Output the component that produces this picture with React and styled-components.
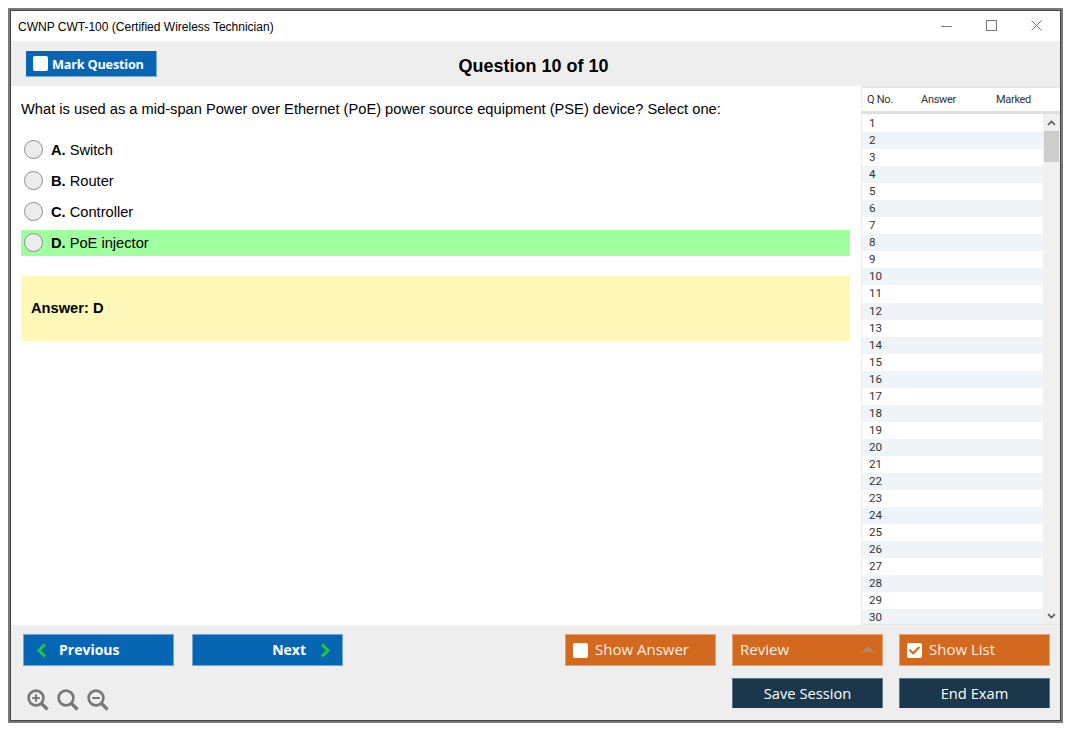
import React from 'react';
import styled, { createGlobalStyle } from 'styled-components';
import { FaCheck } from 'react-icons/fa';

const GlobalStyle = createGlobalStyle`
  html, body { margin: 0; padding: 0; background: #fff; }
  * { box-sizing: border-box; }
`;

const Window = styled.div`
  margin: 8px;
  width: 1055px;
  height: 715px;
  border: 2px solid #7a7a7a;
  display: flex;
  flex-direction: column;
  font-family: "Liberation Sans", Arial, sans-serif;
  color: #000;
  background: #fff;
  outline: 1px solid #444;
  outline-offset: -3px;
  padding: 1px;
`;

const TitleBar = styled.div`
  height: 30px;
  flex: none;
  display: flex;
  align-items: center;
  justify-content: space-between;
  padding-left: 7px;
  font-size: 12px;
  span { padding-top: 2px; }
`;

const WindowControls = styled.div`
  display: flex;
  align-items: center;
  gap: 34px;
  padding: 0 18px 2px 0;
  svg { display: block; }
`;

const Toolbar = styled.div`
  height: 45px;
  flex: none;
  background: #eeeeee;
  display: flex;
  align-items: center;
  padding-left: 15px;
  position: relative;
`;

const Heading = styled.h1`
  position: absolute;
  left: 0;
  right: 4px;
  top: 14px;
  margin: 0;
  padding-top: 1px;
  text-align: center;
  font-size: 18px;
  font-weight: 700;
  line-height: 21px;
`;

const Box = styled.span`
  width: 15px;
  height: 15px;
  flex: none;
  border-radius: 2px;
  background: #fff;
  display: flex;
  align-items: center;
  justify-content: center;
  color: #d2691f;
  font-size: 11px;
`;

const MarkButton = styled.button`
  width: 131px;
  height: 26px;
  border: 1px solid #7fb0da;
  border-width: 0 1px 1px 0;
  background: #0766b3;
  color: #fff;
  display: flex;
  align-items: center;
  gap: 4px;
  padding: 0 0 0 7px;
  font-family: "Open Sans", sans-serif;
  font-size: 12.7px;
  font-weight: 700;
  letter-spacing: -0.2px;
  span:last-child { padding-top: 2px; }
`;

const Body = styled.div`
  flex: 1;
  min-height: 0;
  display: flex;
`;

const Content = styled.main`
  flex: 1;
  min-width: 0;
  padding: 0 11px 0 10px;
`;

const QuestionText = styled.p`
  margin: 14px 0 19px;
  font-size: 14.67px;
  line-height: 18px;
`;

const Options = styled.div`
  display: flex;
  flex-direction: column;
  gap: 5px;
`;

const Option = styled.div`
  height: 26px;
  display: flex;
  align-items: center;
  padding-left: 3px;
  font-size: 14.67px;
  background: ${props => (props.$correct ? '#a0ff9f' : 'transparent')};
  b { margin-right: 4px; }
`;

const Radio = styled.span`
  width: 19px;
  height: 19px;
  flex: none;
  border-radius: 50%;
  border: 1px solid #8f8f8f;
  background: #ececec;
  margin: -2px 8px 0 0;
`;

const AnswerBox = styled.div`
  margin-top: 20px;
  height: 65px;
  background: #fff8b8;
  display: flex;
  align-items: center;
  padding: 0 0 2px 10px;
  font-size: 14.67px;
  font-weight: 700;
`;

const Side = styled.aside`
  width: 199px;
  flex: none;
  display: flex;
  flex-direction: column;
  border-left: 1px solid #eeeeee;
  font-family: Roboto, sans-serif;
  font-size: 11.6px;
  color: #333;
`;

const SideHeader = styled.div`
  height: 28px;
  flex: none;
  display: grid;
  grid-template-columns: 54px 75px 1fr;
  align-items: center;
  padding-left: 5px;
  font-size: 11px;
  letter-spacing: -0.3px;
  border-top: 2px solid #e6e6e6;
  border-bottom: 3px solid #dedede;
`;

const ListArea = styled.div`
  flex: 1;
  min-height: 0;
  display: flex;
  overflow: hidden;
  border-bottom: 1px solid #e3e3e3;
`;

const Rows = styled.div`
  flex: 1;
  min-width: 0;
  padding-top: 1px;
`;

const Row = styled.div`
  height: 17.06px;
  line-height: 17px;
  padding-left: 7px;
  background: ${props => (props.$alt ? '#eff4f8' : '#fff')};
`;

const ScrollBar = styled.div`
  width: 17px;
  flex: none;
  background: #f0f0f0;
  display: flex;
  flex-direction: column;
  align-items: center;
  svg { display: block; }
`;

const ScrollArrow = styled.div`
  height: 17px;
  flex: none;
  display: flex;
  align-items: center;
  justify-content: center;
`;

const Thumb = styled.div`
  width: 15px;
  height: 31px;
  flex: none;
  background: #cdcdcd;
`;

const Spacer = styled.div`
  flex: 1;
`;

const Footer = styled.footer`
  height: 95px;
  flex: none;
  background: #eeeeee;
  display: flex;
  justify-content: space-between;
  padding: 9px 10px 12px 12px;
`;

const FooterLeft = styled.div`
  display: flex;
  flex-direction: column;
  justify-content: space-between;
`;

const NavRow = styled.div`
  display: flex;
  gap: 18px;
`;

const NavButton = styled.button`
  width: 151px;
  height: 32px;
  border: 1px solid #6fa6d6;
  background: #0766b3;
  color: #fff;
  display: flex;
  align-items: center;
  justify-content: ${props => (props.$right ? 'flex-end' : 'flex-start')};
  gap: ${props => (props.$right ? 14 : 12)}px;
  padding: 0 11px 2px 12px;
  font-family: "Open Sans", sans-serif;
  font-size: 14px;
  font-weight: 700;
  svg { display: block; margin-top: 2px; }
`;

const ZoomRow = styled.div`
  display: flex;
  gap: 8px;
  padding-left: 4px;
  margin-bottom: -3px;
  svg { display: block; }
`;

const FooterRight = styled.div`
  display: grid;
  grid-template-columns: repeat(3, 151px);
  grid-template-rows: 32px 30px;
  column-gap: 16px;
  row-gap: 12px;
`;

const ActionButton = styled.button`
  grid-column: ${props => props.$col || 'auto'};
  height: 100%;
  border: 1px solid ${props => (props.$dark ? '#5f7686' : '#e8a070')};
  border-bottom-width: ${props => (props.$dark ? 0 : 1)}px;
  background: ${props => (props.$dark ? '#1b374c' : '#d2691f')};
  color: ${props => (props.$dark ? '#fff' : '#fdeee3')};
  display: flex;
  align-items: center;
  justify-content: ${props => (props.$dark ? 'center' : 'flex-start')};
  gap: 7px;
  padding: 0 7px;
  font-family: "Open Sans", sans-serif;
  font-size: ${props => (props.$dark ? 14.7 : 15)}px;
  line-height: 20px;
  position: relative;
  span.label { margin-top: -2px; }
`;

const Caret = styled.span`
  position: absolute;
  right: 8px;
  top: 11px;
  width: 0;
  height: 0;
  border-left: 6px solid transparent;
  border-right: 6px solid transparent;
  border-bottom: 6px solid #a98a75;
`;

const Chevron = ({ dir }) => (
  <svg width="11" height="15" viewBox="0 0 11 15">
    <path
      d={dir === 'left' ? 'M9 1.5 L3 7.5 L9 13.5' : 'M2 1.5 L8 7.5 L2 13.5'}
      fill="none"
      stroke="#27c53a"
      strokeWidth="3"
    />
  </svg>
);

const ZoomIcon = ({ mark }) => (
  <svg width="22" height="22" viewBox="0 0 22 22" fill="none" stroke="#777" strokeWidth="2.6">
    <circle cx="9" cy="9" r="7.4" />
    <path d="M14.5 14.5 L20.5 20.5" strokeWidth="3.2" />
    {mark !== 'none' && <path d="M5.2 9 H12.8" strokeWidth="2" />}
    {mark === 'plus' && <path d="M9 5.2 V12.8" strokeWidth="2" />}
  </svg>
);

const options = [
  { key: 'A', text: 'Switch' },
  { key: 'B', text: 'Router' },
  { key: 'C', text: 'Controller' },
  { key: 'D', text: 'PoE injector', correct: true },
];

const rows = Array.from({ length: 30 }, (_, i) => i + 1);

export default function App() {
  return (
    <Window>
      <GlobalStyle />
      <TitleBar>
        <span>CWNP CWT-100 (Certified Wireless Technician)</span>
        <WindowControls>
          <svg width="11" height="11" viewBox="0 0 11 11"><path d="M0 6.5H11" stroke="#777" /></svg>
          <svg width="11" height="11" viewBox="0 0 11 11"><rect x="0.5" y="0.5" width="10" height="10" fill="none" stroke="#777" /></svg>
          <svg width="11" height="11" viewBox="0 0 11 11"><path d="M0.5 0.5L10.5 10.5M10.5 0.5L0.5 10.5" stroke="#777" /></svg>
        </WindowControls>
      </TitleBar>

      <Toolbar>
        <MarkButton><Box /><span>Mark Question</span></MarkButton>
        <Heading>Question 10 of 10</Heading>
      </Toolbar>

      <Body>
        <Content>
          <QuestionText>
            What is used as a mid-span Power over Ethernet (PoE) power source equipment (PSE) device? Select one:
          </QuestionText>
          <Options>
            {options.map(o => (
              <Option key={o.key} $correct={o.correct}>
                <Radio />
                <b>{o.key}.</b> {o.text}
              </Option>
            ))}
          </Options>
          <AnswerBox>Answer: D</AnswerBox>
        </Content>

        <Side>
          <SideHeader>
            <span>Q No.</span>
            <span>Answer</span>
            <span>Marked</span>
          </SideHeader>
          <ListArea>
            <Rows>
              {rows.map(n => (
                <Row key={n} $alt={n % 2 === 0}>{n}</Row>
              ))}
            </Rows>
            <ScrollBar>
              <ScrollArrow>
                <svg width="9" height="6" viewBox="0 0 9 6"><path d="M1 5L4.5 1.5L8 5" fill="none" stroke="#555" strokeWidth="1.6" /></svg>
              </ScrollArrow>
              <Thumb />
              <Spacer />
              <ScrollArrow>
                <svg width="9" height="6" viewBox="0 0 9 6"><path d="M1 1L4.5 4.5L8 1" fill="none" stroke="#555" strokeWidth="1.6" /></svg>
              </ScrollArrow>
            </ScrollBar>
          </ListArea>
        </Side>
      </Body>

      <Footer>
        <FooterLeft>
          <NavRow>
            <NavButton><Chevron dir="left" />Previous</NavButton>
            <NavButton $right>Next<Chevron dir="right" /></NavButton>
          </NavRow>
          <ZoomRow>
            <ZoomIcon mark="plus" />
            <ZoomIcon mark="none" />
            <ZoomIcon mark="minus" />
          </ZoomRow>
        </FooterLeft>
        <FooterRight>
          <ActionButton><Box /><span className="label">Show Answer</span></ActionButton>
          <ActionButton><span className="label">Review</span><Caret /></ActionButton>
          <ActionButton><Box><FaCheck /></Box><span className="label">Show List</span></ActionButton>
          <ActionButton $dark $col="2"><span className="label">Save Session</span></ActionButton>
          <ActionButton $dark $col="3"><span className="label">End Exam</span></ActionButton>
        </FooterRight>
      </Footer>
    </Window>
  );
}
